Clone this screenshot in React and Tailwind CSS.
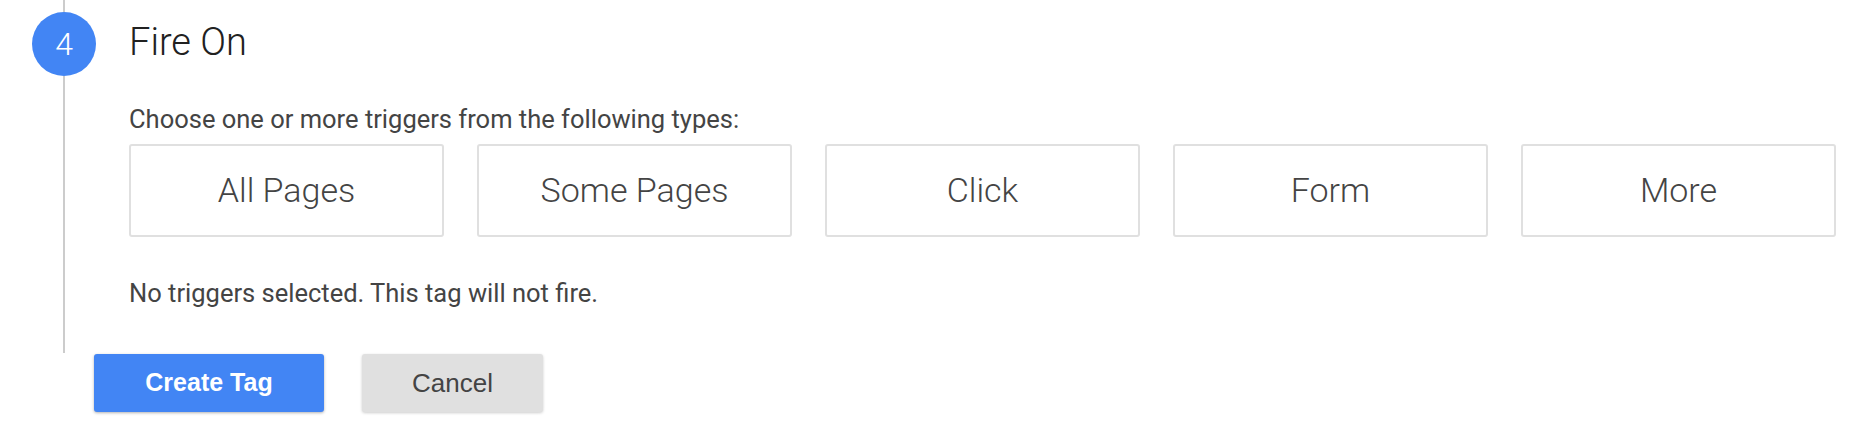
import React from 'react'

// Tag editor: "Fire On" trigger step with the form actions below it

const triggerTypes = ['All Pages', 'Some Pages', 'Click', 'Form', 'More']

function StepRail({ number }) {
  return (
    <div className="w-[128px] flex flex-col items-center flex-shrink-0">
      <div className="w-[2px] h-[12px] bg-[#cccccc]" />
      <div className="w-16 h-16 rounded-full bg-[#4285f4] flex items-center justify-center">
        <span className="text-white text-[32px] leading-none font-light">{number}</span>
      </div>
      <div className="w-[2px] flex-1 bg-[#cccccc]" />
    </div>
  )
}

export default function App() {
  return (
    <div
      className="w-[1866px] h-[430px] bg-white overflow-hidden"
      style={{ fontFamily: 'Roboto, "Noto Sans", sans-serif' }}
    >
      {/* Step 4 */}
      <div className="flex">
        <StepRail number={4} />
        <div className="pl-px pt-[23px] pb-[47px]">
          <h2 className="text-[38px] leading-[38px] font-light text-[#212121]">Fire On</h2>
          <p className="mt-[46px] text-[25.5px] leading-[25px] text-[#444444]">
            Choose one or more triggers from the following types:
          </p>
          <div className="mt-[12px] flex gap-[33px]">
            {triggerTypes.map((type) => (
              <button
                key={type}
                className="w-[315px] h-[93px] border-2 border-[#e0e0e0] rounded-[3px] bg-white flex items-center justify-center text-[34px] font-light text-[#444444]"
              >
                {type}
              </button>
            ))}
          </div>
          <p className="mt-[44px] text-[25.5px] leading-[25px] text-[#444444]">
            No triggers selected. This tag will not fire.
          </p>
        </div>
      </div>

      {/* Actions */}
      <div
        className="mt-px pl-[94px] flex gap-[38px]"
        style={{ fontFamily: '"Liberation Sans", Arial, sans-serif' }}
      >
        <button className="w-[230px] h-[58px] rounded-[3px] bg-[#4285f4] text-white text-[25px] font-bold shadow-[0_1px_3px_rgba(0,0,0,0.3)]">
          Create Tag
        </button>
        <button className="w-[181px] h-[58px] rounded-[3px] bg-[#e0e0e0] text-[#444444] text-[26px] shadow-[0_1px_3px_rgba(0,0,0,0.2)]">
          Cancel
        </button>
      </div>
    </div>
  )
}
